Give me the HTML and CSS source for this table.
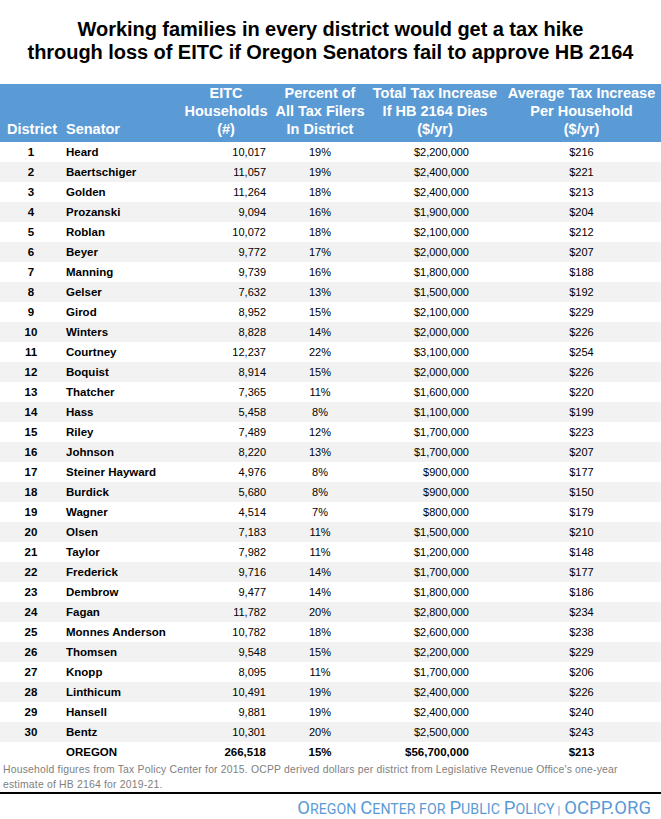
FILE: index.html
```html
<!DOCTYPE html>
<html>
<head>
<meta charset="utf-8">
<link rel="stylesheet" href="styles.css">
</head>
<body>
<div class="page">
  <h1 class="title">Working families in every district would get a tax hike<br>through loss of EITC if Oregon Senators fail to approve HB 2164</h1>
  <table class="grid">
    <colgroup>
      <col class="c-dist"><col class="c-sen"><col class="c-eitc"><col class="c-pct"><col class="c-tot"><col class="c-avg">
    </colgroup>
    <thead>
      <tr>
        <th class="h-dist">District</th>
        <th class="h-sen">Senator</th>
        <th>EITC<br>Households<br>(#)</th>
        <th>Percent of<br>All Tax Filers<br>In District</th>
        <th>Total Tax Increase<br>If HB 2164 Dies<br>($/yr)</th>
        <th>Average Tax Increase<br>Per Household<br>($/yr)</th>
      </tr>
    </thead>
    <tbody>
      <tr><td class="d">1</td><td class="s">Heard</td><td class="e">10,017</td><td class="p">19%</td><td class="t">$2,200,000</td><td class="a">$216</td></tr>
      <tr><td class="d">2</td><td class="s">Baertschiger</td><td class="e">11,057</td><td class="p">19%</td><td class="t">$2,400,000</td><td class="a">$221</td></tr>
      <tr><td class="d">3</td><td class="s">Golden</td><td class="e">11,264</td><td class="p">18%</td><td class="t">$2,400,000</td><td class="a">$213</td></tr>
      <tr><td class="d">4</td><td class="s">Prozanski</td><td class="e">9,094</td><td class="p">16%</td><td class="t">$1,900,000</td><td class="a">$204</td></tr>
      <tr><td class="d">5</td><td class="s">Roblan</td><td class="e">10,072</td><td class="p">18%</td><td class="t">$2,100,000</td><td class="a">$212</td></tr>
      <tr><td class="d">6</td><td class="s">Beyer</td><td class="e">9,772</td><td class="p">17%</td><td class="t">$2,000,000</td><td class="a">$207</td></tr>
      <tr><td class="d">7</td><td class="s">Manning</td><td class="e">9,739</td><td class="p">16%</td><td class="t">$1,800,000</td><td class="a">$188</td></tr>
      <tr><td class="d">8</td><td class="s">Gelser</td><td class="e">7,632</td><td class="p">13%</td><td class="t">$1,500,000</td><td class="a">$192</td></tr>
      <tr><td class="d">9</td><td class="s">Girod</td><td class="e">8,952</td><td class="p">15%</td><td class="t">$2,100,000</td><td class="a">$229</td></tr>
      <tr><td class="d">10</td><td class="s">Winters</td><td class="e">8,828</td><td class="p">14%</td><td class="t">$2,000,000</td><td class="a">$226</td></tr>
      <tr><td class="d">11</td><td class="s">Courtney</td><td class="e">12,237</td><td class="p">22%</td><td class="t">$3,100,000</td><td class="a">$254</td></tr>
      <tr><td class="d">12</td><td class="s">Boquist</td><td class="e">8,914</td><td class="p">15%</td><td class="t">$2,000,000</td><td class="a">$226</td></tr>
      <tr><td class="d">13</td><td class="s">Thatcher</td><td class="e">7,365</td><td class="p">11%</td><td class="t">$1,600,000</td><td class="a">$220</td></tr>
      <tr><td class="d">14</td><td class="s">Hass</td><td class="e">5,458</td><td class="p">8%</td><td class="t">$1,100,000</td><td class="a">$199</td></tr>
      <tr><td class="d">15</td><td class="s">Riley</td><td class="e">7,489</td><td class="p">12%</td><td class="t">$1,700,000</td><td class="a">$223</td></tr>
      <tr><td class="d">16</td><td class="s">Johnson</td><td class="e">8,220</td><td class="p">13%</td><td class="t">$1,700,000</td><td class="a">$207</td></tr>
      <tr><td class="d">17</td><td class="s">Steiner Hayward</td><td class="e">4,976</td><td class="p">8%</td><td class="t">$900,000</td><td class="a">$177</td></tr>
      <tr><td class="d">18</td><td class="s">Burdick</td><td class="e">5,680</td><td class="p">8%</td><td class="t">$900,000</td><td class="a">$150</td></tr>
      <tr><td class="d">19</td><td class="s">Wagner</td><td class="e">4,514</td><td class="p">7%</td><td class="t">$800,000</td><td class="a">$179</td></tr>
      <tr><td class="d">20</td><td class="s">Olsen</td><td class="e">7,183</td><td class="p">11%</td><td class="t">$1,500,000</td><td class="a">$210</td></tr>
      <tr><td class="d">21</td><td class="s">Taylor</td><td class="e">7,982</td><td class="p">11%</td><td class="t">$1,200,000</td><td class="a">$148</td></tr>
      <tr><td class="d">22</td><td class="s">Frederick</td><td class="e">9,716</td><td class="p">14%</td><td class="t">$1,700,000</td><td class="a">$177</td></tr>
      <tr><td class="d">23</td><td class="s">Dembrow</td><td class="e">9,477</td><td class="p">14%</td><td class="t">$1,800,000</td><td class="a">$186</td></tr>
      <tr><td class="d">24</td><td class="s">Fagan</td><td class="e">11,782</td><td class="p">20%</td><td class="t">$2,800,000</td><td class="a">$234</td></tr>
      <tr><td class="d">25</td><td class="s">Monnes Anderson</td><td class="e">10,782</td><td class="p">18%</td><td class="t">$2,600,000</td><td class="a">$238</td></tr>
      <tr><td class="d">26</td><td class="s">Thomsen</td><td class="e">9,548</td><td class="p">15%</td><td class="t">$2,200,000</td><td class="a">$229</td></tr>
      <tr><td class="d">27</td><td class="s">Knopp</td><td class="e">8,095</td><td class="p">11%</td><td class="t">$1,700,000</td><td class="a">$206</td></tr>
      <tr><td class="d">28</td><td class="s">Linthicum</td><td class="e">10,491</td><td class="p">19%</td><td class="t">$2,400,000</td><td class="a">$226</td></tr>
      <tr><td class="d">29</td><td class="s">Hansell</td><td class="e">9,881</td><td class="p">19%</td><td class="t">$2,400,000</td><td class="a">$240</td></tr>
      <tr><td class="d">30</td><td class="s">Bentz</td><td class="e">10,301</td><td class="p">20%</td><td class="t">$2,500,000</td><td class="a">$243</td></tr>
      <tr class="total"><td class="d"></td><td class="s">OREGON</td><td class="e">266,518</td><td class="p">15%</td><td class="t">$56,700,000</td><td class="a">$213</td></tr>
    </tbody>
  </table>
  <p class="note">Household figures from Tax Policy Center for 2015. OCPP derived dollars per district from Legislative Revenue Office's one-year estimate of HB 2164 for 2019-21.</p>
  <div class="brand"><span class="cap">O</span><span class="sm">REGON</span> <span class="cap">C</span><span class="sm">ENTER FOR</span> <span class="cap">P</span><span class="sm">UBLIC</span> <span class="cap">P</span><span class="sm">OLICY</span><span class="bar">|</span> <span class="cap">OCPP.ORG</span></div>
</div>
</body>
</html>
```

FILE: styles.css
```css
html, body {
  margin: 0;
  padding: 0;
  background: #ffffff;
}

.page {
  width: 661px;
  font-family: "Liberation Sans", Arial, sans-serif;
  color: #000;
}

.title {
  margin: 0;
  padding: 18px 0 20px;
  font-size: 20px;
  line-height: 23px;
  font-weight: bold;
  text-align: center;
  letter-spacing: -0.05px;
}

.grid {
  width: 661px;
  table-layout: fixed;
  border-collapse: collapse;
  border-spacing: 0;
}

.c-dist { width: 62px; }
.c-sen { width: 118px; }
.c-eitc { width: 92px; }
.c-pct { width: 96px; }
.c-tot { width: 134px; }
.c-avg { width: 159px; }

.grid thead th {
  background: #5b9bd5;
  color: #fff;
  font-size: 14.5px;
  font-weight: bold;
  line-height: 18px;
  height: 54px;
  padding: 0 0 4px;
  vertical-align: bottom;
  text-align: center;
  white-space: nowrap;
}

.grid thead th.h-dist { text-align: center; padding-left: 2px; }
.grid thead th.h-sen { text-align: left; padding-left: 4px; }

.grid tbody td {
  height: 20px;
  padding: 0;
  font-size: 11px;
  line-height: 20px;
  white-space: nowrap;
}

.grid tbody tr:nth-child(even) td {
  background: #f2f2f2;
}

.grid td.d { text-align: center; font-weight: bold; font-size: 11.5px; }
.grid td.s { text-align: left; padding-left: 4px; font-weight: bold; font-size: 11.5px; }
.grid td.e { text-align: right; padding-right: 6px; }
.grid td.p { text-align: center; }
.grid td.t { text-align: right; padding-right: 33px; }
.grid td.a { text-align: center; }

.grid tr.total td {
  font-weight: bold;
  font-size: 11.5px;
}

.note {
  margin: 0;
  padding: 0 20px 0 3px;
  font-size: 10.4px;
  letter-spacing: 0.2px;
  line-height: 15px;
  color: #808080;
  border-bottom: 2px solid #000;
}

.brand {
  padding: 4px 10px 0 0;
  text-align: right;
  font-family: Roboto, "Liberation Sans", sans-serif;
  color: #5b9bd5;
  line-height: 20px;
  white-space: nowrap;
}

.brand .cap { font-size: 18.5px; }
.brand .sm { font-size: 14.2px; }
.brand .bar { font-size: 11px; margin-left: 3px; }
```
